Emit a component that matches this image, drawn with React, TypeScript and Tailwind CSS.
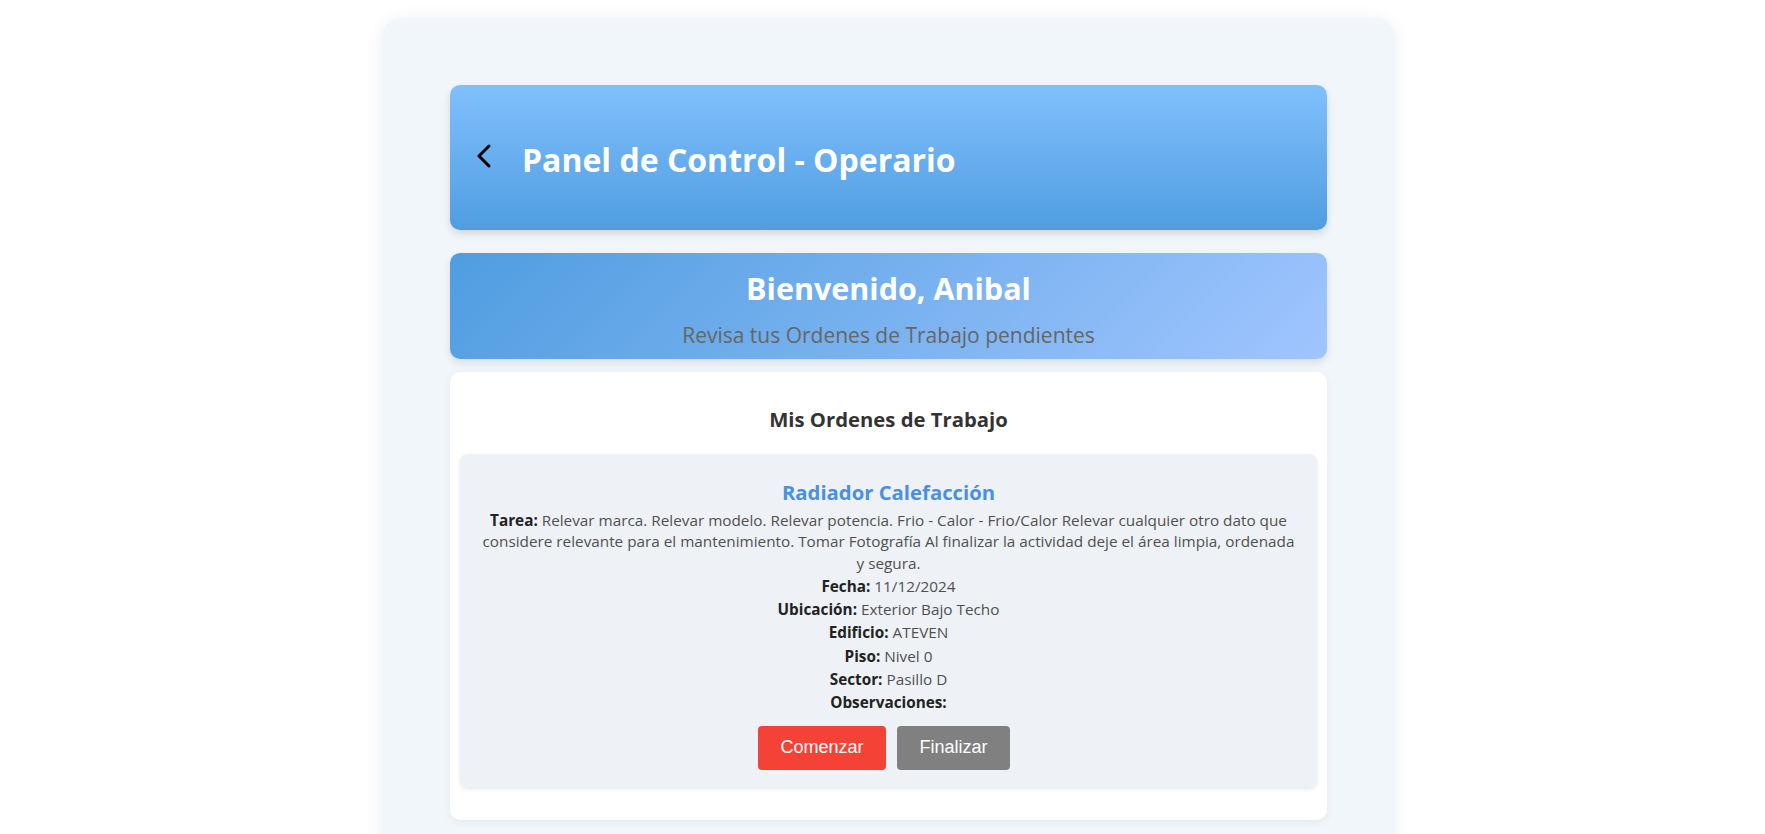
import React from "react";

const font = { fontFamily: '"Open Sans", "Noto Sans", sans-serif' };

function Field({ label, value }: { label: string; value?: string }) {
  return (
    <p className="m-0 text-[15.3px] leading-[21.3px] text-[#505050]">
      <span className="font-bold text-[#222]">{label}</span>
      {value ? ` ${value}` : ""}
    </p>
  );
}

export default function App() {
  return (
    <div className="min-h-[834px] bg-white pt-[18px] pl-[12px]" style={font}>
      <div className="mx-auto w-[1013px] rounded-[20px] bg-[#f1f6fb] px-[68px] pt-[67px] pb-[40px] shadow-[0_2px_18px_rgba(0,0,0,0.07)]">
        {/* Header */}
        <div className="flex h-[145px] items-center rounded-[10px] bg-gradient-to-b from-[#80c0fd] to-[#4f9de0] pt-[5px] pl-[26px] shadow-[0_4px_8px_rgba(0,0,0,0.12)]">
          <svg width="16" height="24" viewBox="0 0 16 24" className="mb-[8px] shrink-0">
            <polyline points="13,2 3,12 13,22" fill="none" stroke="#000" strokeWidth="3" strokeLinecap="round" strokeLinejoin="round" />
          </svg>
          <h1 className="ml-[30px] text-[32px] leading-[40px] font-bold text-white">Panel de Control - Operario</h1>
        </div>

        {/* Welcome */}
        <div className="mt-[23px] flex h-[106px] flex-col items-center rounded-[10px] bg-[linear-gradient(135deg,#4f9de0,#a0c5fe)] pt-[16px] shadow-[0_4px_8px_rgba(0,0,0,0.1)]">
          <h2 className="text-[30.5px] leading-[38px] font-bold text-white">Bienvenido, Anibal</h2>
          <p className="mt-[14px] text-[21px] leading-[28px] text-[#666]">Revisa tus Ordenes de Trabajo pendientes</p>
        </div>

        {/* Orders */}
        <div className="mt-[13px] rounded-[10px] bg-white px-[10px] pt-[34px] pb-[33px] shadow-[0_2px_8px_rgba(0,0,0,0.06)]">
          <h3 className="text-center text-[20.3px] leading-[26px] font-bold text-[#333]">Mis Ordenes de Trabajo</h3>
          <div className="mt-[22px] rounded-[8px] bg-[#eef2f6] px-[20px] pt-[25px] pb-[17px] text-center shadow-[0_2px_4px_rgba(0,0,0,0.1)]">
            <h4 className="text-[20.3px] leading-[26px] font-bold text-[#4a90e2]">Radiador Calefacción</h4>
            <div className="mt-[5px] flex flex-col gap-[2px]">
              <Field
                label="Tarea:"
                value="Relevar marca. Relevar modelo. Relevar potencia. Frio - Calor - Frio/Calor Relevar cualquier otro dato que considere relevante para el mantenimiento. Tomar Fotografía Al finalizar la actividad deje el área limpia, ordenada y segura."
              />
              <Field label="Fecha:" value="11/12/2024" />
              <Field label="Ubicación:" value="Exterior Bajo Techo" />
              <Field label="Edificio:" value="ATEVEN" />
              <Field label="Piso:" value="Nivel 0" />
              <Field label="Sector:" value="Pasillo D" />
              <Field label="Observaciones:" />
            </div>
            <div className="mt-[12px] flex justify-center gap-[11px] pr-[9px]" style={{ fontFamily: '"Liberation Sans", Arial, sans-serif' }}>
              <button className="h-[44px] w-[128px] rounded-[4px] bg-[#f44336] text-[18px] text-white">Comenzar</button>
              <button className="h-[44px] w-[113px] rounded-[4px] bg-[#808080] text-[18px] text-white">Finalizar</button>
            </div>
          </div>
        </div>
      </div>
    </div>
  );
}
